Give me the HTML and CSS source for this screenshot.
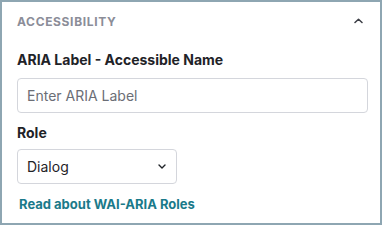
FILE: index.html
```html
<!DOCTYPE html>
<html>
<head>
<meta charset="utf-8">
<link rel="stylesheet" href="styles.css">
</head>
<body>
<div class="panel">
  <div class="header">
    <span class="title">ACCESSIBILITY</span>
    <svg class="chev-up" width="9" height="6" viewBox="0 0 9 6"><path d="M1 4.5 L4.5 1.2 L8 4.5" fill="none" stroke="#3b3d44" stroke-width="1.5" stroke-linecap="round" stroke-linejoin="round"/></svg>
  </div>
  <div class="field">
    <label class="label">ARIA Label - Accessible Name</label>
    <div class="input">Enter ARIA Label</div>
  </div>
  <div class="field">
    <label class="label label-role">Role</label>
    <div class="select">
      <span>Dialog</span>
      <svg width="8" height="5" viewBox="0 0 8 5"><path d="M1 1 L4 4 L7 1" fill="none" stroke="#1f2328" stroke-width="1.4" stroke-linecap="round" stroke-linejoin="round"/></svg>
    </div>
  </div>
  <a class="link" href="#">Read about WAI-ARIA Roles</a>
</div>
</body>
</html>
```

FILE: styles.css
```css
html, body { margin: 0; padding: 0; background: #fff; }
body { font-family: Inter, "Noto Sans", sans-serif; }
.panel {
  box-sizing: border-box;
  width: 382px;
  height: 225px;
  border: 2px solid #8ea6b2;
  padding: 0 12px 0 15px;
  display: flex;
  flex-direction: column;
}
.header {
  display: flex;
  align-items: center;
  justify-content: space-between;
  height: 38px;
  padding-right: 5px;
}
.title {
  font-size: 12px;
  font-weight: 700;
  letter-spacing: 0.65px;
  color: #8b8d98;
}
.field { display: flex; flex-direction: column; }
.label {
  font-size: 14px;
  font-weight: 700;
  color: #1f2328;
  line-height: 20px;
  margin-top: 10px;
  margin-bottom: 8px;
}
.label-role { margin-bottom: 6px; }
.input {
  box-sizing: border-box;
  height: 35px;
  border: 1px solid #d4d6dc;
  border-radius: 4px;
  padding: 0 9px;
  display: flex;
  align-items: center;
  font-size: 14px;
  color: #6b6e76;
}
.select {
  box-sizing: border-box;
  width: 160px;
  height: 35px;
  border: 1px solid #d4d6dc;
  border-radius: 4px;
  padding: 0 10px 0 9px;
  display: flex;
  align-items: center;
  justify-content: space-between;
  font-size: 14px;
  color: #1f2328;
}
.link {
  margin-top: 12px;
  margin-left: 2px;
  font-size: 13px;
  font-weight: 700;
  color: #1a7a8a;
  text-decoration: none;
}
```
